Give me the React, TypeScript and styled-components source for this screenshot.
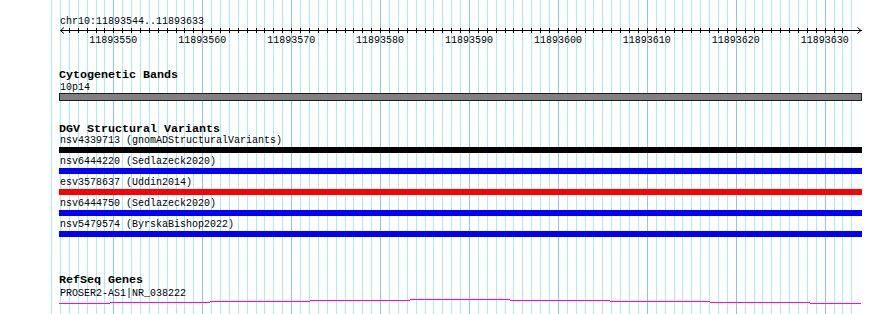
import React from "react";
import styled, { createGlobalStyle } from "styled-components";

const GlobalStyle = createGlobalStyle`
  html, body {
    margin: 0;
    padding: 0;
    background: #ffffff;
  }
  body {
    font-family: "Liberation Mono", "DejaVu Sans Mono", monospace;
    color: #000000;
  }
`;

const TRACK_LEFT = 59;
const TRACK_WIDTH = 803;
const MAJOR0 = 113.3;
const BASE_PX = 8.8925;

const Page = styled.div`
  position: relative;
  width: 890px;
  height: 314px;
  overflow: hidden;
  background: #ffffff;
`;

const GridLayer = styled.div`
  position: absolute;
  left: 0;
  top: 0;
  width: 890px;
  height: 314px;
  pointer-events: none;
  z-index: 0;
`;

const GridLine = styled.div<{ $major?: boolean }>`
  position: absolute;
  top: 0;
  bottom: 0;
  width: 1px;
  background: ${(p) => (p.$major ? "#86c8ef" : "#a9ebf0")};
`;

const Tracks = styled.div`
  position: relative;
  z-index: 1;
  display: flex;
  flex-direction: column;
  width: ${TRACK_WIDTH}px;
  padding: 17px 0 0 ${TRACK_LEFT}px;
`;

const SmallText = styled.div<{ $gap?: number }>`
  font-size: 10px;
  line-height: 11px;
  height: 11px;
  padding-left: 1px;
  margin-top: ${(p) => p.$gap ?? 0}px;
  white-space: nowrap;
`;

const LocationLabel = styled(SmallText)`
  line-height: 10px;
  height: 10px;
`;

const RulerSvg = styled.svg`
  display: block;
  width: ${TRACK_WIDTH}px;
  height: 7px;
  overflow: visible;
`;

const ScaleRow = styled.div`
  position: relative;
  height: 11px;
  margin-top: 1px;
`;

const ScaleLabel = styled.span`
  position: absolute;
  top: 0;
  width: 60px;
  margin-left: -30px;
  text-align: center;
  font-size: 10px;
  line-height: 11px;
  white-space: nowrap;
`;

const TrackHeading = styled.div<{ $gap: number }>`
  font-size: 11.67px;
  font-weight: bold;
  line-height: 12px;
  height: 12px;
  margin-top: ${(p) => p.$gap}px;
  white-space: nowrap;
`;

const BandBar = styled.div`
  box-sizing: border-box;
  width: ${TRACK_WIDTH}px;
  height: 8px;
  background: #808080;
  border: 1px solid #1e1e1e;
`;

const FeatureRow = styled.div`
  display: flex;
  flex-direction: column;
  gap: 1px;
  padding-bottom: 3px;
`;

const FeatureBar = styled.div<{ $color: string }>`
  width: ${TRACK_WIDTH}px;
  height: 6px;
  background: ${(p) => p.$color};
`;

const GeneSvg = styled.svg`
  display: block;
  width: ${TRACK_WIDTH}px;
  height: 5px;
`;

const variants = [
  { name: "nsv4339713 (gnomADStructuralVariants)", color: "#000000" },
  { name: "nsv6444220 (Sedlazeck2020)", color: "#0000ff" },
  { name: "esv3578637 (Uddin2014)", color: "#ff0000" },
  { name: "nsv6444750 (Sedlazeck2020)", color: "#0000ff" },
  { name: "nsv5479574 (ByrskaBishop2022)", color: "#0000ff" },
];

const majorPositions = Array.from({ length: 9 }, (_, m) => MAJOR0 + BASE_PX * 10 * m);

const minorPositions: number[] = [];
for (let k = -7; k <= 83; k++) {
  if (k % 10 === 0) continue;
  minorPositions.push(MAJOR0 + BASE_PX * k);
}

const tickPositions: number[] = [];
for (let k = -5; k <= 82; k++) {
  tickPositions.push(MAJOR0 + BASE_PX * k);
}

const scaleLabels = majorPositions.map((x, i) => ({
  x,
  text: String(11893550 + i * 10),
}));

// gene line segments: [startX, endX, y] in page coords
const geneSegments: [number, number, number][] = [
  [59, 110, 303],
  [110, 210, 302],
  [210, 310, 301],
  [310, 410, 300],
  [410, 510, 299],
  [510, 610, 300],
  [610, 710, 301],
  [710, 810, 302],
  [810, 861, 303],
];

function Grid() {
  return (
    <GridLayer>
      {minorPositions.map((x) => (
        <GridLine key={`mi${x}`} style={{ left: Math.round(x) }} />
      ))}
      {majorPositions.map((x) => (
        <GridLine key={`ma${x}`} $major style={{ left: Math.round(x) }} />
      ))}
    </GridLayer>
  );
}

function Ruler() {
  const left = 60 - TRACK_LEFT;
  const right = 861 - TRACK_LEFT;
  return (
    <>
      <LocationLabel>chr10:11893544..11893633</LocationLabel>
      <RulerSvg viewBox={`0 0 ${TRACK_WIDTH} 7`} shapeRendering="crispEdges">
        <line x1={left} y1={3.5} x2={right + 0.5} y2={3.5} stroke="#000" strokeWidth={1} />
        {tickPositions.map((x) => {
          const lx = Math.round(x) - TRACK_LEFT + 0.5;
          return <line key={x} x1={lx} y1={1} x2={lx} y2={6} stroke="#000" strokeWidth={1} />;
        })}
        <polyline
          points={`${left + 4},0.5 ${left + 0.5},3.5 ${left + 4},6.5`}
          fill="none"
          stroke="#000"
          strokeWidth={1}
          shapeRendering="auto"
        />
        <polyline
          points={`${right - 3.5},0.5 ${right},3.5 ${right - 3.5},6.5`}
          fill="none"
          stroke="#000"
          strokeWidth={1}
          shapeRendering="auto"
        />
      </RulerSvg>
      <ScaleRow>
        {scaleLabels.map((l) => (
          <ScaleLabel key={l.text} style={{ left: l.x - TRACK_LEFT }}>
            {l.text}
          </ScaleLabel>
        ))}
      </ScaleRow>
    </>
  );
}

export default function App() {
  return (
    <>
      <GlobalStyle />
      <Page>
        <Grid />
        <Tracks>
          <Ruler />

          <TrackHeading $gap={23}>Cytogenetic Bands</TrackHeading>
          <SmallText $gap={1}>10p14</SmallText>
          <BandBar />

          <TrackHeading $gap={22}>DGV Structural Variants</TrackHeading>
          {variants.map((v) => (
            <FeatureRow key={v.name}>
              <SmallText>{v.name}</SmallText>
              <FeatureBar $color={v.color} />
            </FeatureRow>
          ))}

          <TrackHeading $gap={34}>RefSeq Genes</TrackHeading>
          <SmallText $gap={2}>PROSER2-AS1|NR_038222</SmallText>
          <GeneSvg viewBox={`0 0 ${TRACK_WIDTH} 5`} shapeRendering="crispEdges">
            {geneSegments.map(([x1, x2, y]) => (
              <line
                key={x1}
                x1={x1 - TRACK_LEFT}
                x2={x2 - TRACK_LEFT}
                y1={y - 299 + 0.5}
                y2={y - 299 + 0.5}
                stroke="#ff00ff"
                strokeWidth={1}
              />
            ))}
          </GeneSvg>
        </Tracks>
      </Page>
    </>
  );
}
